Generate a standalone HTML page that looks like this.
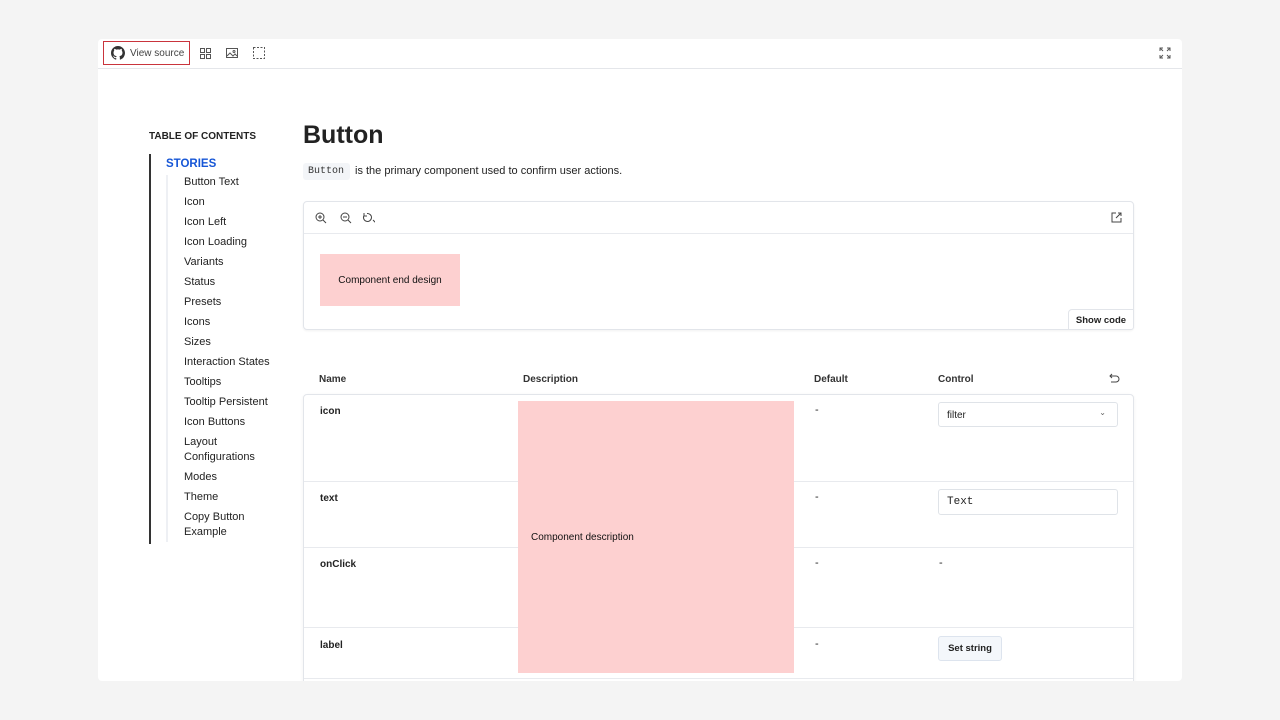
<!DOCTYPE html>
<html><head><meta charset="utf-8"><style>
*{box-sizing:border-box;margin:0;padding:0}
body{width:1280px;height:720px;background:#f4f4f4;font-family:"Liberation Sans",sans-serif;position:relative;overflow:hidden;color:#222}
.card{position:absolute;left:98px;top:39px;width:1084px;height:642px;background:#fff;border-radius:4px;overflow:hidden}
.tb{position:absolute;left:0;top:0;width:100%;height:30px;border-bottom:1px solid #e4e6ea}
.vs{position:absolute;left:5px;top:2px;width:87px;height:24px;border:1.5px solid #c9343c;font-size:10px;color:#444;padding:6px 0 0 26px}
.abs{position:absolute}
.t{position:absolute;font-size:11px;color:#222;white-space:nowrap;transform:translateY(1px)}
.toc div{position:absolute;left:86px;font-size:11px;color:#222;line-height:15px;transform:translateY(1px)}
.b{font-weight:bold}
</style></head><body>
<div class="card">
<div class="tb">
<div class="vs"><svg class="abs" style="left:7px;top:4px" width="14" height="14" viewBox="0 0 16 16"><path fill="#333" d="M8 0C3.6 0 0 3.6 0 8c0 3.5 2.3 6.5 5.5 7.6.4.1.5-.2.5-.4v-1.4c-2.2.5-2.7-1-2.7-1-.4-.9-.9-1.2-.9-1.2-.7-.5.1-.5.1-.5.8.1 1.2.8 1.2.8.7 1.2 1.9.9 2.3.7.1-.5.3-.9.5-1.1-1.8-.2-3.6-.9-3.6-4 0-.9.3-1.6.8-2.1-.1-.2-.4-1 .1-2.1 0 0 .7-.2 2.2.8a7.500 7.500 0 0 1 4 0c1.5-1 2.2-.8 2.2-.8.4 1.1.2 1.900.1 2.100.5.6.8 1.300.8 2.100 0 3.1-1.900 3.800-3.600 4 .3.2.6.7.6 1.5v2.2c0 .2.1.5.6.4A8 8 0 0 0 16 8c0-4.4-3.6-8-8-8z"/></svg>View source</div>
<svg class="abs" style="left:102px;top:9px" width="11" height="11" viewBox="0 0 11 11" fill="none" stroke="#555"><rect x=".5" y=".5" width="4" height="4"/><rect x="6.5" y=".5" width="4" height="4"/><rect x=".5" y="6.5" width="4" height="4"/><rect x="6.5" y="6.5" width="4" height="4"/></svg>
<svg class="abs" style="left:128px;top:8px" width="12" height="12" viewBox="0 0 12 12" fill="none" stroke="#555"><rect x=".5" y="1.5" width="11" height="9"/><path d="M1 9l3-3 3 3 2-2 2 2"/><circle cx="8" cy="4.5" r="1"/></svg>
<svg class="abs" style="left:155px;top:8px" width="12" height="12" viewBox="0 0 12 12" fill="none" stroke="#555" stroke-dasharray="2 1.5"><rect x=".5" y=".5" width="11" height="11"/></svg>
<svg class="abs" style="left:1061px;top:8px" width="12" height="12" viewBox="0 0 12 12" fill="none" stroke="#555"><path d="M1 4V1h3M8 1h3v3M11 8v3H8M4 11H1V8M1 1l3 3M11 1L8 4M11 11L8 8M1 11l3-3"/></svg>
</div>
<div class="t b" style="left:51px;top:91px;font-size:10px">TABLE OF CONTENTS</div>
<div class="abs" style="left:51px;top:115px;width:2px;height:390px;background:#333"></div>
<div class="abs" style="left:68px;top:136px;width:2px;height:367px;background:#eef0f4"></div>
<div class="toc">
<div class="b" style="left:68px;top:117px;color:#1656d6;font-size:11.5px">STORIES</div>
<div style="top:135px">Button Text</div><div style="top:155px">Icon</div><div style="top:175px">Icon Left</div><div style="top:195px">Icon Loading</div><div style="top:215px">Variants</div><div style="top:235px">Status</div><div style="top:255px">Presets</div><div style="top:275px">Icons</div><div style="top:295px">Sizes</div><div style="top:315px">Interaction States</div><div style="top:335px">Tooltips</div><div style="top:355px">Tooltip Persistent</div><div style="top:375px">Icon Buttons</div><div style="top:395px">Layout<br>Configurations</div><div style="top:430px">Modes</div><div style="top:450px">Theme</div><div style="top:470px">Copy Button<br>Example</div>
</div>
<div class="t b" style="left:205px;top:81px;font-size:25px;color:#222">Button</div>
<div class="abs" style="left:205px;top:124px;width:47px;height:17px;background:#f3f5f8;border-radius:3px;font-family:'Liberation Mono',monospace;font-size:10px;padding:3px 0 0 5px;color:#333">Button</div>
<div class="t" style="left:257px;top:125px">is the primary component used to confirm user actions.</div>
<div class="abs" style="left:205px;top:162px;width:831px;height:129px;border:1px solid #e2e5ea;border-radius:4px;box-shadow:0 1px 2px rgba(0,0,0,.06)">
<div class="abs" style="left:0;top:31px;width:100%;height:1px;background:#e8eaee"></div>
<svg class="abs" style="left:11px;top:10px" width="60" height="12" viewBox="0 0 60 12" fill="none" stroke="#444"><circle cx="5" cy="5" r="4"/><path d="M8 8l3 3M3 5h4M5 3v4"/><circle cx="30" cy="5" r="4"/><path d="M33 8l3 3M28 5h4"/><path d="M52 1.5a4 4 0 1 1-3 2"/><path d="M58 8l3 3M49 1v3h3"/></svg>
<svg class="abs" style="left:807px;top:10px" width="11" height="11" viewBox="0 0 11 11" fill="none" stroke="#444"><path d="M5 1H1v9h9V6M7 1h3v3M10 1L5 6"/></svg>
<div class="abs" style="left:16px;top:52px;width:140px;height:52px;background:#fdd0d0;font-size:10px;color:#111;text-align:center;line-height:54px">Component end design</div>
<div class="abs" style="left:764px;top:107px;width:66px;height:21px;border:1px solid #e2e5ea;border-radius:4px 0 3px 0;font-size:9.5px;font-weight:bold;text-align:center;line-height:21px;background:#fff">Show code</div>
</div>
<div class="t b" style="left:221px;top:334px;font-size:10px;color:#333">Name</div>
<div class="t b" style="left:425px;top:334px;font-size:10px;color:#333">Description</div>
<div class="t b" style="left:716px;top:334px;font-size:10px;color:#333">Default</div>
<div class="t b" style="left:840px;top:334px;font-size:10px;color:#333">Control</div>
<svg class="abs" style="left:1011px;top:334px" width="11" height="10" viewBox="0 0 11 10" fill="none" stroke="#444"><path d="M1 3h6a3 3 0 0 1 0 6H2M3 1L1 3l2 2"/></svg>
<div class="abs" style="left:205px;top:355px;width:831px;height:300px;border:1px solid #e2e5ea;border-radius:4px;box-shadow:0 1px 3px rgba(0,0,0,.06)">
<div class="abs" style="left:0;top:86px;width:100%;height:1px;background:#e8eaee"></div>
<div class="abs" style="left:0;top:152px;width:100%;height:1px;background:#e8eaee"></div>
<div class="abs" style="left:0;top:232px;width:100%;height:1px;background:#e8eaee"></div>
<div class="abs" style="left:0;top:283px;width:100%;height:1px;background:#e8eaee"></div>
</div>
<div class="t b" style="left:222px;top:366px;font-size:10px">icon</div>
<div class="t b" style="left:222px;top:453px;font-size:10px">text</div>
<div class="t b" style="left:222px;top:519px;font-size:10px">onClick</div>
<div class="t b" style="left:222px;top:600px;font-size:10px">label</div>
<div class="t" style="left:717px;top:364px">-</div><div class="t" style="left:717px;top:451px">-</div><div class="t" style="left:717px;top:517px">-</div><div class="t" style="left:717px;top:598px">-</div>
<div class="t" style="left:841px;top:517px">-</div>
<div class="abs" style="left:420px;top:362px;width:276px;height:272px;background:#fdd0d0;font-size:10px;color:#111;padding:131px 0 0 13px">Component description</div>
<div class="abs" style="left:840px;top:363px;width:180px;height:25px;border:1px solid #dfe3e8;border-radius:3px;font-size:10px;padding:7px 0 0 8px">filter<span style="position:absolute;right:11px;top:5px;font-size:8px;color:#666">&#8964;</span></div>
<div class="abs" style="left:840px;top:450px;width:180px;height:26px;border:1px solid #dfe3e8;border-radius:3px;font-family:'Liberation Mono',monospace;font-size:11px;padding:6px 0 0 8px">Text</div>
<div class="abs" style="left:840px;top:597px;width:64px;height:25px;border:1px solid #dde4ee;border-radius:3px;background:#f4f7fb;font-size:9.5px;font-weight:bold;text-align:center;line-height:24px">Set string</div>
</div>
</body></html>
